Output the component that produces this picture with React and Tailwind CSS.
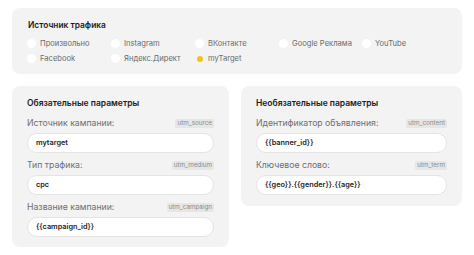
const sources = [
  ['Произвольно', false],
  ['Instagram', false],
  ['ВКонтакте', false],
  ['Google Реклама', false],
  ['YouTube', false],
  ['Facebook', false],
  ['Яндекс.Директ', false],
  ['myTarget', true],
]

const Field = ({ label, tag, value }) => (
  <div className="mb-[6px] last:mb-0">
    <div className="flex items-center justify-between h-[12px]">
      <span className="text-[8.7px] text-[#6e6e6e] leading-[12px]">{label}</span>
      <span className="text-[6.3px] leading-[9px] px-[2px] rounded-[2px] bg-[#e6e6e6] text-[#8a8a8a]">{tag}</span>
    </div>
    <div className="mt-[4px] h-[20px] rounded-full bg-white border border-[#e4e4e4] flex items-center pl-[8px] text-[7.3px] font-semibold text-[#1a1a1a]">
      {value}
    </div>
  </div>
)

const App = () => {
  return (
    <div className="w-[474px] h-[255px] bg-white px-3 pt-2 font-['Inter',sans-serif]">
      {/* Источник трафика */}
      <div className="h-[66px] rounded-lg bg-[#f3f3f3] pl-[15px] pr-4 pt-[11px]">
        <div className="text-[8.4px] font-semibold leading-[12px] text-[#1a1a1a] pl-px">Источник трафика</div>
        <div className="grid grid-cols-[84px_84px_84px_83px_84px] mt-[5px]">
          {sources.map(([name, active]) => (
            <div key={name} className="flex items-center h-[15px] gap-[4px]">
              {active ? (
                <span className="w-[9px] h-[9px] flex items-center justify-center">
                  <span className="w-[6px] h-[6px] rounded-full bg-[#f4c40f]" />
                </span>
              ) : (
                <span className="w-[9px] h-[9px] rounded-full bg-white" />
              )}
              <span className="text-[7.6px] text-[#6b6b6b] leading-[12px]">{name}</span>
            </div>
          ))}
        </div>
      </div>

      <div className="flex items-start gap-3 mt-3">
        <div className="w-[217px] rounded-lg bg-[#f3f3f3] px-[15px] pt-[11px] pb-[10px]">
          <div className="text-[8.5px] font-semibold leading-[12px] text-[#1a1a1a] mb-[8px]">Обязательные параметры</div>
          <Field label="Источник кампании:" tag="utm_source" value="mytarget" />
          <Field label="Тип трафика:" tag="utm_medium" value="cpc" />
          <Field label="Название кампании:" tag="utm_campaign" value="{{campaign_id}}" />
        </div>
        <div className="flex-1 rounded-lg bg-[#f3f3f3] px-[15px] pt-[11px] pb-[11px]">
          <div className="text-[8.5px] font-semibold leading-[12px] text-[#1a1a1a] mb-[8px]">Необязательные параметры</div>
          <Field label="Идентификатор объявления:" tag="utm_content" value="{{banner_id}}" />
          <Field label="Ключевое слово:" tag="utm_term" value="{{geo}}.{{gender}}.{{age}}" />
        </div>
      </div>
    </div>
  )
}

export default App
